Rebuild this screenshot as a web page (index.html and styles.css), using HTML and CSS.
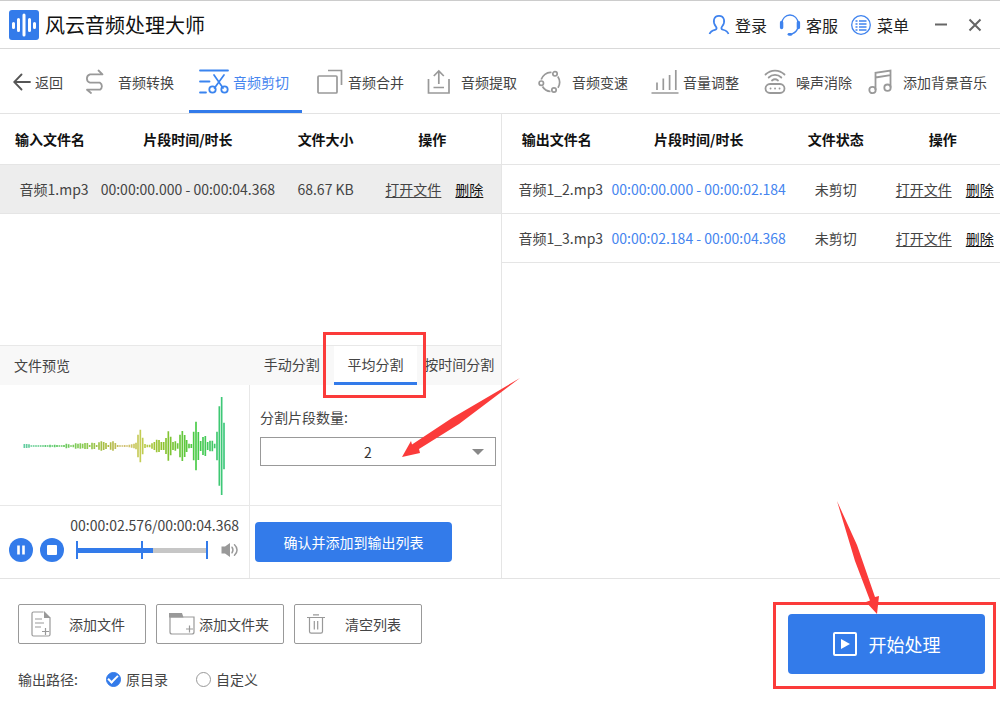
FILE: index.html
```
<!DOCTYPE html>
<html lang="zh-CN">
<head>
<meta charset="utf-8">
<title>风云音频处理大师</title>
<link rel="stylesheet" href="styles.css">
</head>
<body>
<div class="app">
  <header class="titlebar">
    <svg class="logo" viewBox="0 0 30 30" width="30" height="30"><rect width="30" height="30" rx="3" fill="#337bea"/><path d="M4.500 13.500v4M9.500 9.500v11M15 5v20M20.500 9.500v11M25.500 13.500v4" stroke="#fff" stroke-width="3" stroke-linecap="round"/></svg>
    <h1 class="title">风云音频处理大师</h1>
    <div class="account">
      <button class="account-btn" type="button"><svg width="22" height="22" viewBox="0 0 22 22" fill="none" stroke="#3f83ee" stroke-width="1.700"><path d="M1.500 20c.8-2.600 3-3.600 5.500-4.200 2-.5 2-1.800.9-3.200C4.300 8 5.500 1.800 11 1.800S17.700 8 14.100 12.600c-1.100 1.400-1.100 2.700.9 3.200 2.500.6 4.700 1.600 5.500 4.200"/></svg>登录</button>
      <button class="account-btn" type="button"><svg width="22" height="22" viewBox="0 0 22 22" fill="none" stroke="#3f83ee" stroke-width="1.300"><path d="M3 9a8 8 0 0 1 16 0M19 13c-.6 3-2.800 5.800-6 6.800"/><path d="M2.600 8.500v5M19.400 8.500v5" stroke-width="3.400" stroke-linecap="round"/><path d="M10 20.300h2" stroke-width="2.800" stroke-linecap="round"/></svg>客服</button>
      <button class="account-btn" type="button"><svg width="22" height="22" viewBox="0 0 22 22" fill="none" stroke="#3f83ee"><circle cx="11" cy="11" r="9.300" stroke-width="1.300"/><path d="M5.500 7h2M9 7h7.500M5.500 10h2M9 10h7.500M5.500 13h2M9 13h7.500M5.500 16h2M9 16h7.500" stroke-width="1.500"/></svg>菜单</button>
    </div>
    <div class="window-btns">
      <button type="button" aria-label="最小化"><svg width="14" height="14" viewBox="0 0 14 14" stroke="#666" stroke-width="2"><path d="M1 6.500h12"/></svg></button>
      <button type="button" aria-label="关闭"><svg width="14" height="14" viewBox="0 0 14 14" stroke="#666" stroke-width="2"><path d="M1.500 1.500l11 11M12.500 1.500l-11 11"/></svg></button>
    </div>
  </header>

  <nav class="tools">
    <button class="tool tool-back" type="button"><svg width="18" height="18" viewBox="0 0 18 18" fill="none" stroke="#555" stroke-width="1.800" stroke-linecap="round"><path d="M17 9H1.500M8.500 1.500L1.200 9l7.300 7.500"/></svg>返回</button>
    <button class="tool tool-convert" type="button"><svg width="22" height="26" viewBox="0 0 22 26" fill="none" stroke="#999" stroke-width="1.800" stroke-linecap="round" stroke-linejoin="round"><path d="M14.500 1.500l4 3.800H6a4.400 4.400 0 0 0 0 8.400h10a4.200 4.200 0 0 1 0 7H3l4 3.300"/></svg>音频转换</button>
    <button class="tool tool-active" type="button"><svg width="30" height="26" viewBox="0 0 30 26" fill="none" stroke="#3a84ef" stroke-width="1.800" stroke-linecap="round"><path d="M1 1.500h28M1 12.500h9.500M1 23.500h6"/><path d="M15 6l9 13M25 6l-9.500 13" stroke-width="1.700"/><circle cx="13.500" cy="20.500" r="3.200"/><circle cx="25.500" cy="20.500" r="3.200"/></svg>音频剪切</button>
    <button class="tool tool-merge" type="button"><svg width="26" height="26" viewBox="0 0 26 26" fill="none" stroke="#999" stroke-width="1.700"><rect x="1" y="7" width="19" height="17" rx="1"/><path d="M11 1.500h13.500V16"/></svg>音频合并</button>
    <button class="tool tool-extract" type="button"><svg width="24" height="26" viewBox="0 0 24 26" fill="none" stroke="#999" stroke-width="1.700"><path d="M1.500 10v14h20.500V10M6.500 18.500h10.500M11.800 15V2.500M6.800 7l5-5 5 5"/></svg>音频提取</button>
    <button class="tool tool-speed" type="button"><svg width="24" height="24" viewBox="0 0 24 24" fill="none" stroke="#999" stroke-width="1.700"><path d="M3.200 9.500C4.500 5.500 8.500 2 13.500 2.500M19.800 6.500c2.400 3.700 2.300 7.800.2 11.200M4.500 16.500c1.700 3 4.700 4.700 8 5"/><circle cx="17" cy="3.800" r="2.200"/><circle cx="3.300" cy="13.200" r="2.200"/><circle cx="16" cy="20" r="2.200"/></svg>音频变速</button>
    <button class="tool tool-volume" type="button"><svg width="28" height="26" viewBox="0 0 28 26" fill="none" stroke="#999" stroke-width="1.700"><path d="M.5 24h27M6 13.500V21M12.300 9.500V21M18.600 6V21M24.800 1V21"/></svg>音量调整</button>
    <button class="tool tool-noise" type="button"><svg width="22" height="26" viewBox="0 0 22 26" fill="none" stroke="#999" stroke-width="1.800" stroke-linecap="round"><path d="M1.500 5.500c5.300-5.300 13.700-5.300 19 0M4.700 8.500c3.500-3.400 9.100-3.400 12.600 0M8 11.500c1.800-1.500 4.200-1.500 6 0"/><rect x="1.500" y="15" width="19" height="9" rx="4.500"/><path d="M6.500 19.500h.1M11 19.500h.1M15.500 19.500h.1"/></svg>噪声消除</button>
    <button class="tool tool-music" type="button"><svg width="24" height="26" viewBox="0 0 24 26" fill="none" stroke="#999" stroke-width="1.800"><path d="M7.500 21V3.800L22.500 1.500v17M7.500 8.500l15-2.300"/><circle cx="4.500" cy="21" r="3.200"/><circle cx="19.500" cy="18.700" r="3.200"/></svg>添加背景音乐</button>
  </nav>

  <main class="main">
    <section class="input-side">
      <table class="files input-files">
        <colgroup><col class="c-name"><col class="c-time"><col class="c-info"><col class="c-ops"></colgroup>
        <thead><tr><th>输入文件名</th><th>片段时间/时长</th><th>文件大小</th><th>操作</th></tr></thead>
        <tbody>
          <tr class="selected"><td>音频1.mp3</td><td>00:00:00.000 - 00:00:04.368</td><td>68.67 KB</td><td><a href="#">打开文件</a><a class="del" href="#">删除</a></td></tr>
        </tbody>
      </table>

      <div class="editor">
        <div class="preview">
          <h2 class="strip">文件预览</h2>
          <div class="wave">
            <svg width="206" height="100" viewBox="0 0 618 300" fill="none" stroke="url(#tone)" stroke-width="5">
              <defs><linearGradient id="tone" gradientUnits="userSpaceOnUse" x1="0" y1="0" x2="610" y2="0"><stop offset="0" stop-color="#63cda5"/><stop offset=".15" stop-color="#57c865"/><stop offset=".3" stop-color="#8ccb52"/><stop offset=".42" stop-color="#aebb43"/><stop offset=".5" stop-color="#d2bf73"/><stop offset=".58" stop-color="#c4cd53"/><stop offset=".68" stop-color="#91c22d"/><stop offset=".85" stop-color="#47cb45"/><stop offset="1" stop-color="#3cc780"/></linearGradient></defs>
              <path d="M4 144v12M11 144v12M18 145v10M25 148v4M32 148v4M39 148v4M46 148v4M53 148v4M60 148v4M67 147v6M74 148v4M81 146v8M88 148v4M95 146v8M102 147v6M109 148v4M116 148v4M123 147v6M130 143v14M137 145v10M144 148v4M151 146v8M158 142v16M165 143v14M172 142v16M179 143v14M186 141v18M193 141v18M200 147v6M207 140v20M214 141v18M221 147v6M228 139v22M235 136v28M242 138v24M249 141v18M256 147v6M263 139v22M270 136v28M277 141v18M284 147v6M291 148v4M298 148v4M305 147v6M312 148v4M319 146v8M326 145v10M333 143v14M339 140v20M345 116v68M352 101v98M359 125v50M366 144v12M373 146v8M380 146v8M387 142v16M394 138v24M401 131v38M408 132v36M415 138v24M422 138v24M429 126v48M436 106v88M443 122v56M450 138v24M457 136v28M464 142v16M471 116v68M478 105v90M485 117v66M491 132v36M498 143v14M505 144v12M512 107v86M519 77v146M526 108v84M533 135v30M540 123v54M547 120v60M554 138v24M561 134v32M568 134v32M575 143v14M582 107v86M589 31v238M596 3v294M603 80v140"/>
            </svg>
          </div>
          <div class="player">
            <div class="clock">00:00:02.576/00:00:04.368</div>
            <div class="controls">
              <button class="round" type="button" aria-label="暂停"><svg width="24" height="24" viewBox="0 0 24 24"><circle cx="12" cy="12" r="12" fill="#337bea"/><path d="M9.500 7.500v9M14.500 7.500v9" stroke="#fff" stroke-width="2.600"/></svg></button>
              <button class="round" type="button" aria-label="停止"><svg width="24" height="24" viewBox="0 0 24 24"><circle cx="12" cy="12" r="12" fill="#337bea"/><rect x="7" y="7" width="10" height="10" rx="1" fill="#fff"/></svg></button>
              <input class="seek" type="range" min="0" max="4368" value="2576" aria-label="播放进度">
              <button class="round" type="button" aria-label="音量"><svg width="18" height="18" viewBox="0 0 18 18" fill="none" stroke="#999" stroke-width="1.500"><path d="M.5 5.500H4L9 2v14l-5-3.500H.5z" fill="#999" stroke="none"/><path d="M11 6.200c1.200 1.800 1.200 3.800 0 5.600M13.500 3.800c3.400 3 3.400 7.400 0 10.400" stroke-linecap="round"/></svg></button>
            </div>
          </div>
        </div>

        <div class="split">
          <div class="strip modes">
            <button class="mode" type="button">手动分割</button>
            <button class="mode mode-active" type="button">平均分割</button>
            <button class="mode" type="button">按时间分割</button>
          </div>
          <div class="split-body">
            <label for="count">分割片段数量:</label>
            <div class="select-box"><select id="count"><option>2</option><option>3</option><option>4</option></select></div>
            <svg class="arrow arrow-count" width="118" height="80" viewBox="0 0 118 80" fill="#fb3b3a"><path d="M118 0L50 40 10 66.500 9 63 0 79l18-4-1-4L57 46z"/></svg>
          </div>
          <div class="split-confirm"><button class="primary" type="button">确认并添加到输出列表</button></div>
        </div>
      </div>
    </section>

    <section class="output-side">
      <table class="files output-files">
        <colgroup><col class="c-name"><col class="c-time"><col class="c-info"><col class="c-ops"></colgroup>
        <thead><tr><th>输出文件名</th><th>片段时间/时长</th><th>文件状态</th><th>操作</th></tr></thead>
        <tbody>
          <tr><td>音频1_2.mp3</td><td>00:00:00.000 - 00:00:02.184</td><td>未剪切</td><td><a href="#">打开文件</a><a class="del" href="#">删除</a></td></tr>
          <tr><td>音频1_3.mp3</td><td>00:00:02.184 - 00:00:04.368</td><td>未剪切</td><td><a href="#">打开文件</a><a class="del" href="#">删除</a></td></tr>
        </tbody>
      </table>
    </section>
  </main>

  <footer class="bottom">
    <div class="bottom-left">
      <div class="file-btns">
        <button class="outline" type="button"><svg width="20" height="26" viewBox="0 0 20 26" fill="none" stroke="#999" stroke-width="1.200"><path d="M12.500 1H2.500Q1 1 1 2.500v21Q1 25 2.500 25h15q1.500 0 1.500-1.500V7"/><path d="M13 0l7 7h-7z" fill="#999" stroke="none"/><path d="M4 8h7M4 12h9M4 16h6M14.500 17v7M11 20.500h7"/></svg><span>添加文件</span></button>
        <button class="outline" type="button"><svg width="26" height="22" viewBox="0 0 26 22" fill="none" stroke="#999" stroke-width="1.200"><path d="M1 4v15q0 2 2 2h20q2 0 2-2V4z"/><path d="M0 0h13l1.500 4.500H0z" fill="#999" stroke="none"/><path d="M20.500 12.500v7M17 16h7"/></svg><span>添加文件夹</span></button>
        <button class="outline" type="button"><svg width="18" height="20" viewBox="0 0 18 20" fill="none" stroke="#999" stroke-width="1.200"><path d="M6 .8h6M0 3.500h18M2.500 3.500v14q0 1.700 1.700 1.700h9.600q1.700 0 1.700-1.700v-14M7.300 7v8.500M10.700 7v8.500"/></svg><span>清空列表</span></button>
      </div>
      <div class="path">
        <span class="path-title">输出路径:</span>
        <label><input type="radio" name="path" checked>原目录</label>
        <label><input type="radio" name="path">自定义</label>
      </div>
    </div>
    <div class="start-box">
      <button class="primary start" type="button"><svg width="24" height="24" viewBox="0 0 24 24"><rect x="1" y="1" width="22" height="22" rx="1" fill="none" stroke="#fff" stroke-width="2"/><path d="M8 7l9 5-9 5z" fill="#fff"/></svg>开始处理</button>
      <svg class="arrow arrow-start" width="44" height="114" viewBox="0 0 44 114" fill="#fb3b3a"><path d="M0 0l20 44 18 52 4-1-2 18-11-12 4-1.500L18 60z"/></svg>
    </div>
  </footer>
</div>
</body>
</html>
```
FILE: styles.css
```
* { box-sizing: border-box; }

body {
  margin: 0;
  background: #fff;
  color: #444;
  font: 14px/20px "Noto Sans CJK SC", "Noto Sans", sans-serif;
}

button {
  padding: 0;
  border: 0;
  background: none;
  color: inherit;
  font: inherit;
  white-space: nowrap;
}

svg { display: block; flex: none; }

.app {
  display: flex;
  flex-direction: column;
  min-height: 100vh;
}

/* title bar */
.titlebar {
  display: flex;
  align-items: center;
  height: 49px;
  padding: 0 18px 0 9px;
  border-top: 1px solid #ccc;
  border-bottom: 1px solid #d9d9d9;
}
.title {
  flex: 1;
  margin: 0 0 0 6px;
  color: #111;
  font-size: 20px;
  font-weight: 400;
  line-height: 28px;
}
.account { display: flex; gap: 12px; }
.account-btn {
  display: flex;
  align-items: center;
  gap: 5px;
  color: #222;
  font-size: 16px;
  line-height: 24px;
}
.window-btns {
  display: flex;
  gap: 20px;
  margin-left: 25px;
}

/* tool navigation */
.tools {
  display: grid;
  grid-template-columns: 76fr repeat(7, 113fr) 133fr;
  height: 65px;
  border-bottom: 1px solid #e3e3e3;
}
.tool {
  display: flex;
  align-items: center;
  justify-content: space-between;
  padding: 4px 13px 0 10px;
  border-bottom: 3px solid transparent;
}
.tool-back { padding-left: 13px; }
.tool-convert { padding-right: 15px; padding-left: 8px; }
.tool-merge { padding-right: 11px; padding-left: 15px; }
.tool-extract { padding-right: 11px; padding-left: 12px; }
.tool-volume, .tool-noise { padding-right: 15px; }
.tool-music { padding-left: 1px; }
.tool-active { border-color: #337bea; color: #4585ef; }

/* main area */
.main {
  display: grid;
  grid-template-columns: 502fr 498fr;
  flex: 1;
}
.input-side {
  display: flex;
  flex-direction: column;
  justify-content: space-between;
  border-right: 1px solid #e5e5e5;
}

.files {
  width: 100%;
  border-collapse: collapse;
  table-layout: fixed;
}
.files th {
  height: 50px;
  padding: 0;
  border-bottom: 1px solid #e5e5e5;
  color: #111;
  font-weight: 700;
}
.files td {
  height: 49px;
  padding: 0;
  border-bottom: 1px solid #e5e5e5;
  text-align: center;
  white-space: nowrap;
}
.files td:first-child { padding-left: 8px; }
.files a { color: #444; text-underline-offset: 2px; }
.files .del { margin-left: 14px; color: #111; }
.selected { background: #ededed; }
.input-files .c-name { width: 20%; }
.input-files .c-time { width: 35%; }
.input-files .c-info { width: 20%; }
.input-files th:last-child { padding-right: 12px; }
.input-files td:last-child { padding-right: 8px; }
.output-files .c-name { width: 22%; }
.output-files .c-time { width: 35%; }
.output-files .c-info { width: 20%; }
.output-files td:nth-child(2) { color: #4585ef; }
.output-files td:last-child { padding-left: 4px; }

/* preview and split editor */
.editor {
  display: grid;
  grid-template-columns: 250fr 251fr;
  border-top: 1px solid #e8e8e8;
}
.preview, .split {
  display: grid;
  grid-template-rows: 39px 120px 73px;
  min-width: 0;
}
.preview { border-right: 1px solid #e8e8e8; }
.strip {
  margin: 0;
  background: #f8f8f8;
  font-size: 14px;
  font-weight: 400;
  line-height: 39px;
}
h2.strip { padding-left: 14px; }
.wave { padding: 11px 23px; }
.player {
  display: flex;
  flex-direction: column;
  gap: 3px;
  padding: 9px 13px 0 9px;
  border-top: 1px solid #e8e8e8;
}
.clock { text-align: right; }
.controls {
  display: flex;
  align-items: center;
  gap: 7px;
}
.seek {
  flex: 1;
  min-width: 0;
  height: 18px;
  margin: 0 6px 0 5px;
  appearance: none;
  background:
    linear-gradient(#337bea, #337bea) left / 2px 18px no-repeat,
    linear-gradient(#337bea, #337bea) center / 2px 18px no-repeat,
    linear-gradient(#337bea, #337bea) right / 2px 18px no-repeat,
    linear-gradient(90deg, #337bea 58%, #c6c6c6 58%) center / 100% 5px no-repeat;
}
.seek::-webkit-slider-thumb {
  width: 2px;
  height: 18px;
  appearance: none;
  background: transparent;
}

.modes {
  display: grid;
  grid-template-columns: repeat(3, 1fr);
  line-height: 20px;
}
.mode { border-bottom: 3px solid transparent; }
.mode-active {
  position: relative;
  border-color: #337bea;
  background: #fff;
}
.mode-active::after {
  position: absolute;
  inset: -14px -9px -16px -11px;
  border: 3px solid #fb3b3a;
  content: "";
}
.split-body {
  position: relative;
  padding: 22px 5px 0 10px;
}
.split-body label { display: block; margin-bottom: 10px; }
.select-box { position: relative; }
.select-box select {
  width: 100%;
  height: 29px;
  padding: 0 20px 0 0;
  appearance: none;
  border: 1px solid #999;
  border-radius: 0;
  background: #fff;
  color: #333;
  font: inherit;
  text-align-last: center;
}
.select-box::after {
  position: absolute;
  top: 12px;
  right: 12px;
  border: 6px solid transparent;
  border-top-color: #888;
  border-bottom: 0;
  content: "";
  pointer-events: none;
}
.split-confirm {
  padding: 16px 5px;
  border-top: 1px solid #e8e8e8;
}
.primary {
  width: 197px;
  height: 40px;
  border-radius: 4px;
  background: #337bea;
  color: #fff;
}
.arrow {
  position: absolute;
  z-index: 1;
  pointer-events: none;
}
.arrow-count { top: -7px; left: 152px; }

/* bottom bar */
.bottom {
  display: flex;
  align-items: center;
  justify-content: space-between;
  height: 126px;
  padding: 8px 4px 0 18px;
  border-top: 1px solid #e3e3e3;
}
.bottom-left {
  display: grid;
  gap: 25px;
  padding-top: 2px;
}
.file-btns { display: flex; gap: 10px; }
.outline {
  display: flex;
  align-items: center;
  width: 128px;
  height: 40px;
  padding: 0 14px 0 12px;
  border: 1px solid #999;
  border-radius: 2px;
}
.outline span { flex: 1; text-align: right; }
.outline:first-child, .outline:last-child { padding-right: 20px; }
.path {
  display: flex;
  gap: 28px;
}
.path label {
  display: flex;
  align-items: center;
  gap: 5px;
}
.path input {
  width: 15px;
  height: 15px;
  margin: 0;
  appearance: none;
  border: 1px solid #999;
  border-radius: 50%;
}
.path input:checked {
  display: grid;
  place-items: center;
  border-color: #337bea;
  background: #337bea;
}
.path input:checked::before {
  width: 8px;
  height: 4px;
  margin-bottom: 2px;
  border: solid #fff;
  border-width: 0 0 2px 2px;
  content: "";
  transform: rotate(-45deg);
}
.start-box {
  position: relative;
  padding: 9px 8px 12px 12px;
  border: 3px solid #fb3b3a;
}
.start {
  display: flex;
  align-items: center;
  justify-content: center;
  gap: 12px;
  height: 60px;
  font-size: 18px;
}
.arrow-start { top: -104px; left: 61px; }
```
